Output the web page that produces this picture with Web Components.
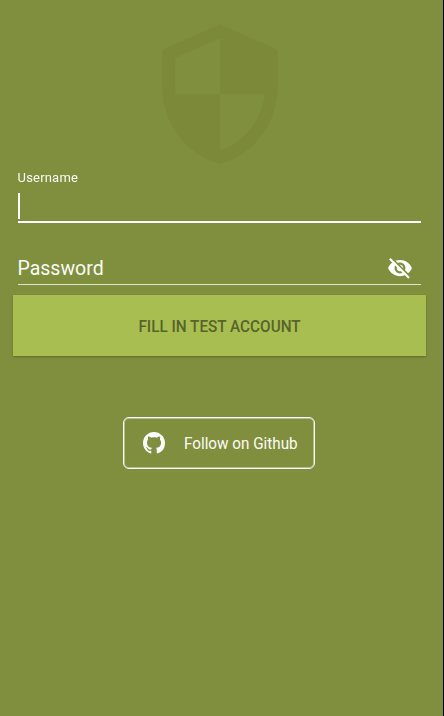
<!DOCTYPE html>
<html lang="en">
<head>
<meta charset="utf-8">
<title>Login</title>
<style>
html,body{margin:0;height:100%;background:#808f3e}
</style>
</head>
<body>
<login-screen></login-screen>
<script>
class Base extends HTMLElement {
  constructor() {
    super();
    this.attachShadow({mode: 'open'});
  }
  render(html) { this.shadowRoot.innerHTML = html; }
}

customElements.define('shield-logo', class extends Base {
  connectedCallback() {
    this.render(`<style>
      :host{display:block;width:154px;height:152px}
      svg{display:block}
    </style>
    <svg width="154" height="152" viewBox="0 0 24 24" preserveAspectRatio="none" fill="#7b8939"><path d="M12 1L3 5v6c0 5.55 3.84 10.74 9 12 5.16-1.26 9-6.45 9-12V5l-9-4zm0 10.99h7c-.53 4.12-3.28 7.79-7 8.94V12H5V6.3l7-3.11v8.8z"/></svg>`);
  }
});

customElements.define('text-field', class extends Base {
  connectedCallback() {
    this.render(`<style>
      :host{display:flex;flex-direction:column;box-sizing:border-box;color:#fbfcf6}
      .label{font-size:13px;line-height:16px;letter-spacing:.2px;transform:scaleY(1.04)}
      .caret{width:2px;height:26px;margin-top:7px;background:#fbfcf6}
      .row{display:flex;align-items:center;justify-content:space-between;height:30px}
      .hint{font-size:19.5px;line-height:24px;padding-top:2px}
      .line{height:1px;background:#e0e4cc;margin-top:1px}
      :host([focused]) .line{height:2px;background:#fff;margin-top:2px}
      ::slotted(*){margin-right:8px}
    </style>
    ${this.hasAttribute('focused')
      ? '<div class="label"></div><div class="caret"></div>'
      : '<div class="row"><span class="hint"></span><slot></slot></div>'}
    <div class="line"></div>`);
    this.shadowRoot.querySelector('.label,.hint').textContent = this.getAttribute('label');
  }
});

customElements.define('eye-off-icon', class extends Base {
  connectedCallback() {
    this.render(`<style>:host{display:block;width:26px;height:26px}svg{display:block}</style>
    <svg width="26" height="26" viewBox="0 0 24 24">
      <defs><mask id="cut"><rect width="24" height="24" fill="#fff"/><path d="M3.5 1.9L22.5 20.9" stroke="#000" stroke-width="1.5"/></mask></defs>
      <g mask="url(#cut)"><path fill="#fff" d="M12 4.5C7 4.5 2.73 7.61 1 12c1.73 4.39 6 7.5 11 7.5s9.27-3.11 11-7.5c-1.73-4.39-6-7.5-11-7.5zM12 17c-2.76 0-5-2.24-5-5s2.24-5 5-5 5 2.24 5 5-2.24 5-5 5zm0-8c-1.66 0-3 1.34-3 3s1.34 3 3 3 3-1.34 3-3-1.34-3-3-3z" fill-rule="evenodd"/></g>
      <path d="M2.6 3.4L20.4 21.3" stroke="#fff" stroke-width="1.9"/>
    </svg>`);
  }
});

customElements.define('raised-button', class extends Base {
  connectedCallback() {
    this.render(`<style>
      :host{display:flex;align-items:center;justify-content:center;height:61px;background:#a9be50;color:#57642b;
        box-shadow:0 1px 2px rgba(40,50,10,.38);font-size:15.3px;font-weight:500;text-transform:uppercase}
      span{display:block;transform:translateY(.6px) scaleY(1.04)}
    </style><span><slot></slot></span>`);
  }
});

customElements.define('github-button', class extends Base {
  connectedCallback() {
    this.render(`<style>
      :host{display:flex;align-items:center;box-sizing:border-box;width:192px;height:52px;
        border:1px solid #fff;box-shadow:inset 0 0 0 1px rgba(255,255,255,.4);border-radius:6px;padding-left:19px;gap:19px;color:#fbfcf6;font-size:15.5px;white-space:nowrap}
      svg{display:block;flex:none}
      span{display:block;transform:translateY(.7px) scale(.983,1.04);transform-origin:0 50%}
    </style>
    <svg width="22" height="22" viewBox="0 0 16 16" fill="#fff"><path d="M8 0C3.58 0 0 3.58 0 8c0 3.54 2.29 6.53 5.47 7.59.4.07.55-.17.55-.38 0-.19-.01-.82-.01-1.49-2.01.37-2.53-.49-2.69-.94-.09-.23-.48-.94-.82-1.13-.28-.15-.68-.52-.01-.53.63-.01 1.08.58 1.23.82.72 1.21 1.87.87 2.33.66.07-.52.28-.87.51-1.07-1.78-.2-3.64-.89-3.64-3.95 0-.87.31-1.59.82-2.15-.08-.2-.36-1.02.08-2.12 0 0 .67-.21 2.2.82.64-.18 1.32-.27 2-.27s1.36.09 2 .27c1.53-1.04 2.2-.82 2.2-.82.44 1.1.16 1.92.08 2.12.51.56.82 1.27.82 2.15 0 3.07-1.87 3.75-3.65 3.95.29.25.54.73.54 1.48 0 1.07-.01 1.93-.01 2.2 0 .21.15.46.55.38A8.01 8.01 0 0 0 16 8c0-4.42-3.58-8-8-8z"/></svg>
    <span><slot></slot></span>`);
  }
});

customElements.define('login-screen', class extends Base {
  connectedCallback() {
    this.render(`<style>
      :host{display:flex;flex-direction:column;box-sizing:border-box;width:444px;height:716px;overflow:hidden;
        background:#808f3e;border-right:1px solid #000;padding:17.5px 17px 0 13px;font-family:Roboto,sans-serif}
      shield-logo{margin:0 0 .5px 129.5px}
      text-field{margin:0 5px 0 4.5px}
      .pass{margin-top:30px}
      raised-button{margin-top:10px}
      github-button{margin:61px 0 0 110px}
    </style>
    <shield-logo></shield-logo>
    <text-field label="Username" focused></text-field>
    <text-field class="pass" label="Password"><eye-off-icon></eye-off-icon></text-field>
    <raised-button>Fill in test account</raised-button>
    <github-button>Follow on Github</github-button>`);
  }
});
</script>
</body>
</html>
